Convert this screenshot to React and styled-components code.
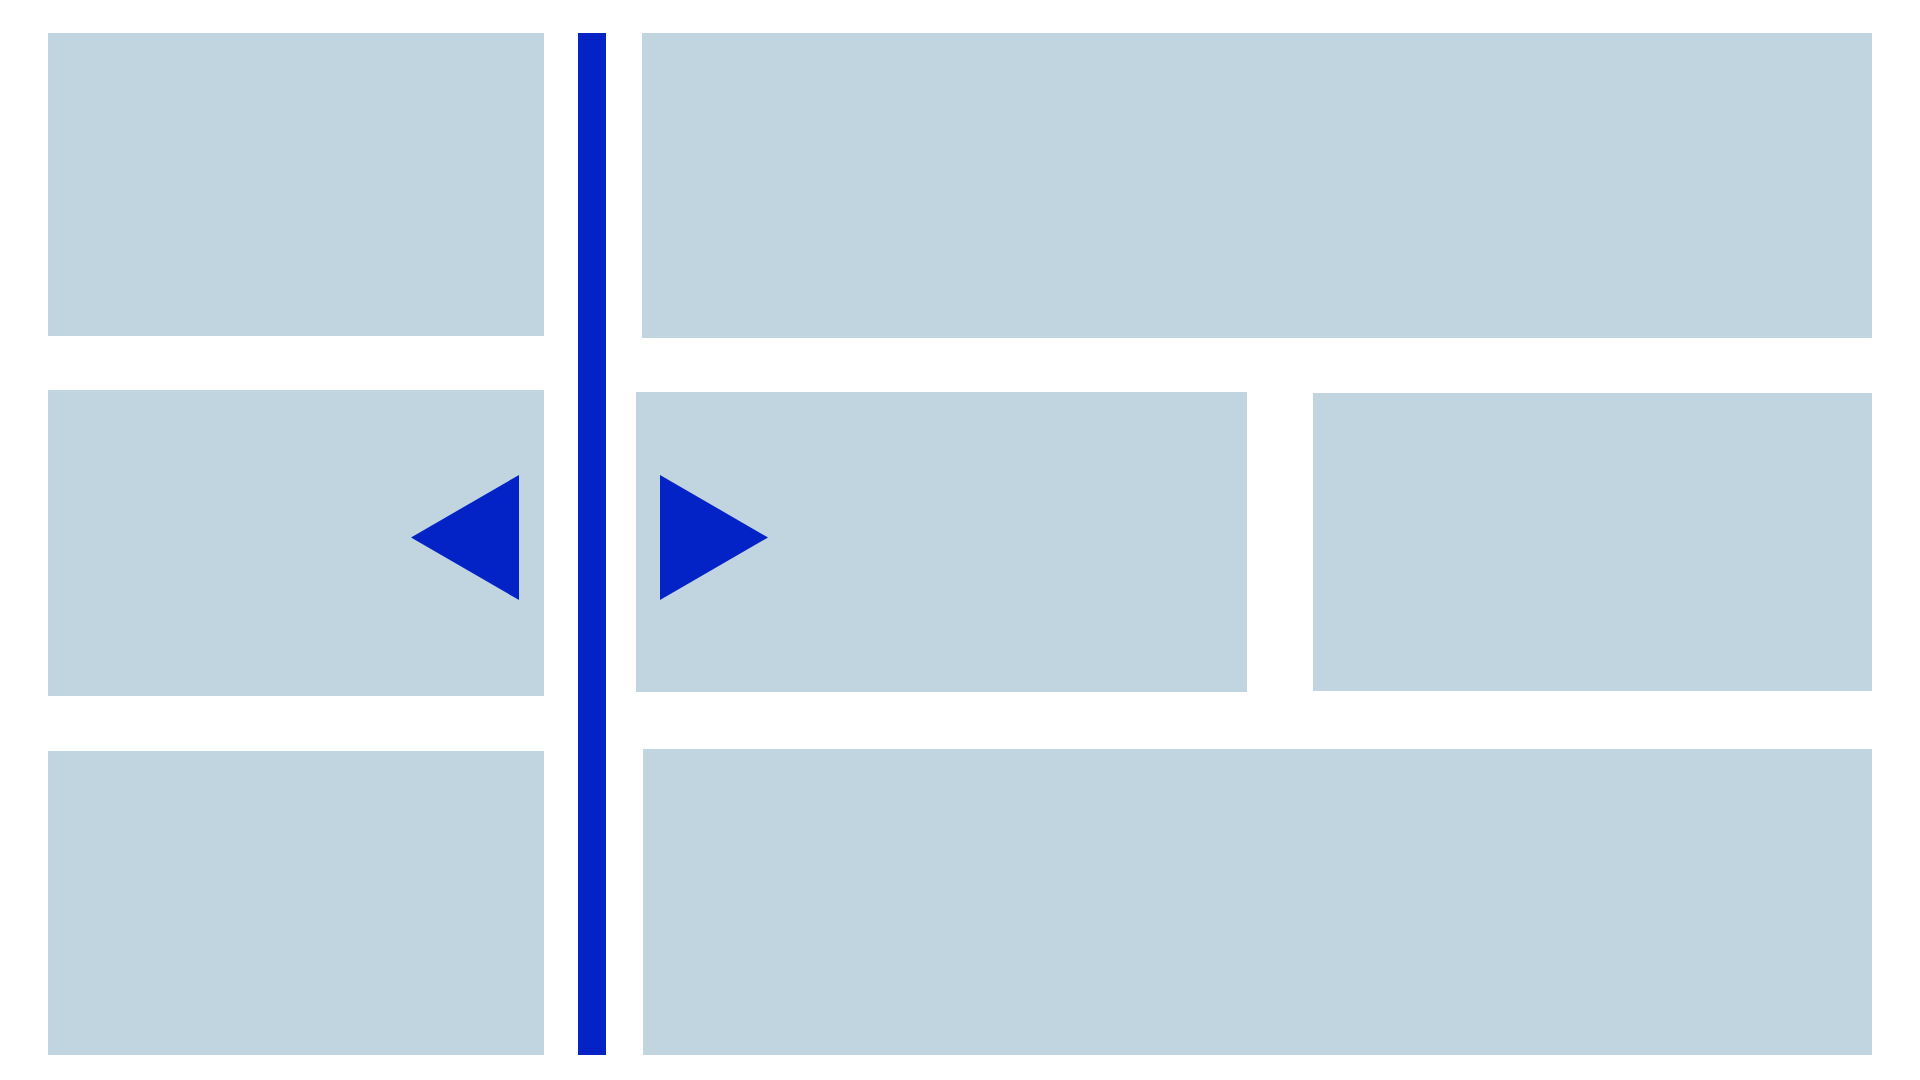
import React from "react";
import styled, { createGlobalStyle } from "styled-components";

const Global = createGlobalStyle`
  html, body { margin: 0; padding: 0; background: #ffffff; }
  body { font-family: "Liberation Sans", Arial, sans-serif; }
`;

const BOX = "#c1d5e0";
const BLUE = "#0323c7";

const Page = styled.div`
  width: 1920px;
  height: 1080px;
  box-sizing: border-box;
  padding: 33px 0 0 48px;
  display: flex;
  align-items: flex-start;
`;

const LeftColumn = styled.div`
  width: 496px;
  display: flex;
  flex-direction: column;
`;

const Panel = styled.div`
  background: ${BOX};
  width: ${(p) => p.$w}px;
  height: ${(p) => p.$h}px;
  margin-top: ${(p) => p.$mt || 0}px;
  margin-left: ${(p) => p.$ml || 0}px;
  flex-shrink: 0;
  box-sizing: border-box;
  display: flex;
  align-items: flex-start;
  justify-content: ${(p) => (p.$arrow === "left" ? "flex-end" : "flex-start")};
  padding: ${(p) =>
    p.$arrow === "left"
      ? "85px 25px 0 0"
      : p.$arrow === "right"
      ? "83px 0 0 24px"
      : "0"};
`;

const Divider = styled.div`
  width: 28px;
  height: 1022px;
  margin-left: 34px;
  background: ${BLUE};
  flex-shrink: 0;
`;

const RightArea = styled.div`
  margin-left: 30px;
  width: 1236px;
  display: flex;
  flex-direction: column;
`;

const Row = styled.div`
  display: flex;
  align-items: flex-start;
  margin-top: ${(p) => p.$mt || 0}px;
`;

const Arrow = ({ dir }) => (
  <svg width="108" height="125" viewBox="0 0 108 125" aria-hidden="true">
    {dir === "left" ? (
      <polygon points="108,0 108,125 0,62.5" fill={BLUE} />
    ) : (
      <polygon points="0,0 0,125 108,62.5" fill={BLUE} />
    )}
  </svg>
);

export default function App() {
  return (
    <>
      <Global />
      <Page>
        <LeftColumn>
          <Panel $w={496} $h={303} />
          <Panel $w={496} $h={306} $mt={54} $arrow="left">
            <Arrow dir="left" />
          </Panel>
          <Panel $w={496} $h={304} $mt={55} />
        </LeftColumn>
        <Divider />
        <RightArea>
          <Panel $w={1230} $h={305} $ml={6} />
          <Row $mt={54}>
            <Panel $w={611} $h={300} $arrow="right">
              <Arrow dir="right" />
            </Panel>
            <Panel $w={559} $h={298} $ml={66} $mt={1} />
          </Row>
          <Panel $w={1229} $h={306} $ml={7} $mt={57} />
        </RightArea>
      </Page>
    </>
  );
}
